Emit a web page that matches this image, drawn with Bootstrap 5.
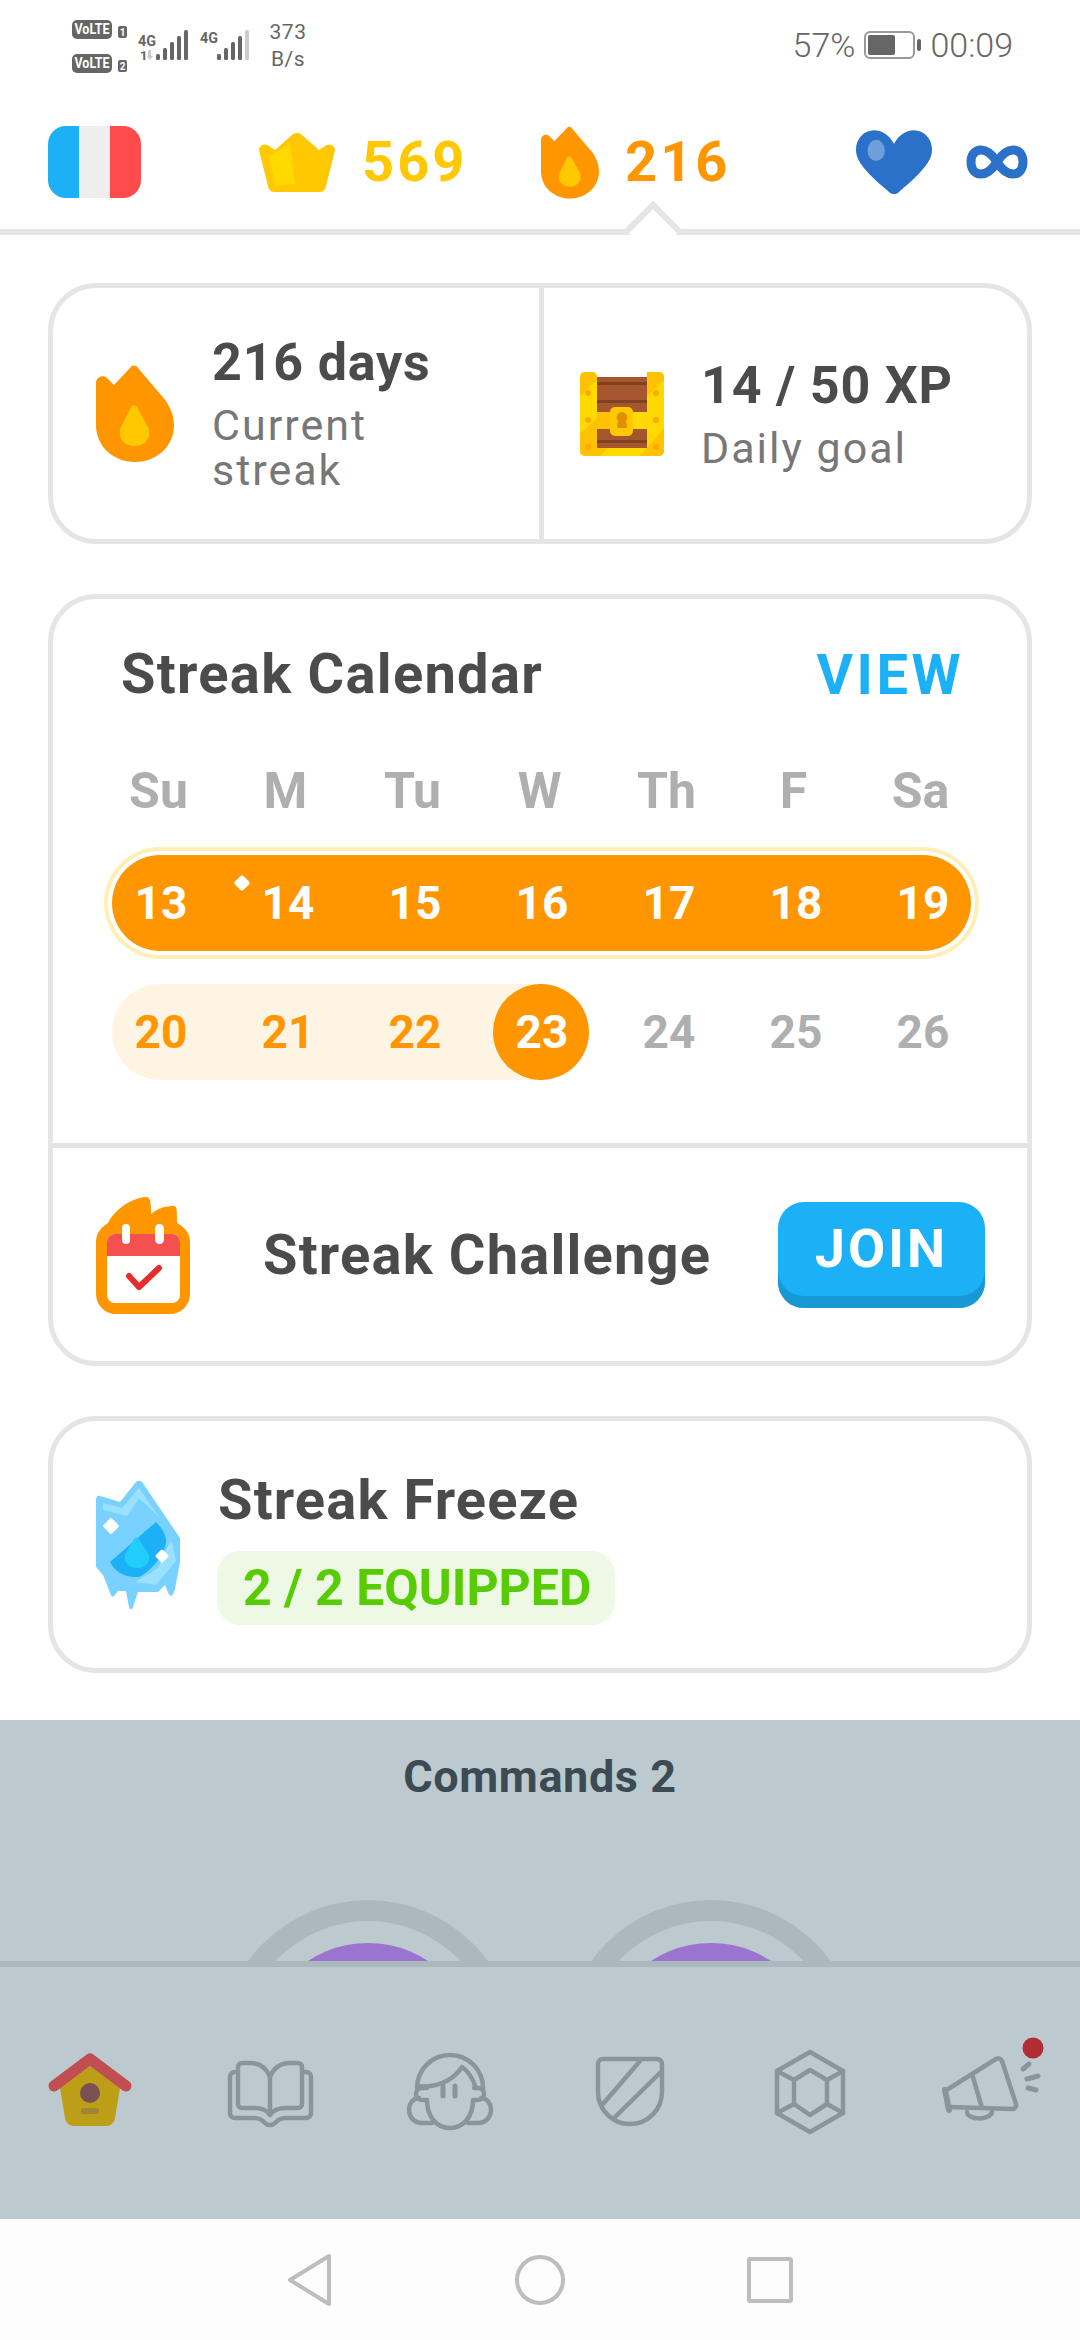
<!DOCTYPE html>
<html lang="en">
<head>
  <meta charset="UTF-8">
  <title>Streak</title>
  <link href="https://cdn.jsdelivr.net/npm/bootstrap@5.3.0/dist/css/bootstrap.min.css" rel="stylesheet">
  <style>
    html, body { margin: 0; }
    body {
      width: 1080px;
      height: 2340px;
      overflow: hidden;
      background: #fff;
      font-family: Roboto, "Liberation Sans", sans-serif;
      color: #4b4b4b;
    }
    svg { display: block; flex: none; }

    /* status bar */
    .status-bar { height: 100px; flex: none; color: #666; }
    .signal-icons { margin: 10px 0 0 60px; }
    .net-speed { font-size: 21px; line-height: 27px; font-weight: 400; text-align: center; width: 44px; margin-top: 19px; margin-left: -4px; letter-spacing: .5px; }
    .status-right { font-size: 34px; font-weight: 300; margin: 0 67px 0 auto; height: 90px; gap: 9px; }

    /* top bar */
    .top-bar { height: 135px; flex: none; padding: 0 0 5px 48px; border-bottom: 6px solid #e5e5e5; }
    .flag-box { width: 93px; height: 72px; border-radius: 18px; overflow: hidden; }
    .flag-box span { flex: 1; }
    .flag-blue { background: #1cb0f6; }
    .flag-white { background: #eeeeef; }
    .flag-red { background: #ff4b4b; }
    .stat-num { font-size: 56px; font-weight: 700; letter-spacing: 3px; line-height: 1; }
    .crown-group { margin-left: 118px; gap: 27px; width: 208px; color: #ffc800; }
    .flame-group { margin-left: 74px; gap: 26px; width: 187px; color: #ff9600; }
    .hearts-group { margin-left: 128px; gap: 34px; }
    .notch {
      position: absolute;
      left: 633px;
      bottom: -20px;
      width: 40px;
      height: 40px;
      background: #fff;
      border-top: 6px solid #e5e5e5;
      border-left: 6px solid #e5e5e5;
      transform: rotate(45deg);
    }

    /* cards */
    .page-main { padding: 48px 48px 0; gap: 50px; height: 1485px; flex: none; }
    .panel { border: 5px solid #e5e5e5; border-radius: 48px; background: #fff; overflow: hidden; }
    .panel-goal { height: 261px; }
    .goal-left { flex: 0 0 491px; width: 491px; border-right: 5px solid #e5e5e5; padding-left: 43px; gap: 38px; }
    .goal-right { flex: 1 1 0; width: auto; padding-left: 36px; gap: 37px; }
    .goal-title { font-size: 52px; font-weight: 700; line-height: 58px; letter-spacing: .8px; margin-bottom: 11px; }
    .goal-sub { font-size: 43px; line-height: 45px; color: #777; letter-spacing: 2px; }

    .cal-head { height: 152px; padding: 0 63px 0 68px; }
    .cal-title { font-size: 56px; font-weight: 700; letter-spacing: 1.3px; margin: 0; }
    .view-link { font-size: 56px; font-weight: 700; color: #1cb0f6; letter-spacing: 3.5px; text-decoration: none; }
    .day-names { height: 80px; margin: 0 44px 0 42px; }
    .day-names span, .day-cell { width: 127px; flex: none; text-align: center; }
    .day-names span { font-size: 50px; font-weight: 700; color: #afafaf; }
    .week { height: 96px; margin: 0 56px 0 59px; border-radius: 48px; }
    .week-on { margin-top: 24px; background: #ff9600; box-shadow: 0 0 0 4px #fff, 0 0 0 8px #ffefb5; }
    .week-off {
      margin-top: 33px;
      margin-bottom: 63px;
      border-radius: 48px 0 0 48px;
      background: linear-gradient(to right, #fdf4e4 428px, transparent 428px);
    }
    .week-days { margin: 0 -13px 0 -17px; height: 96px; }
    .day-cell { font-size: 46px; font-weight: 700; line-height: 96px; position: relative; padding-left: 5px; }
    .day-white { color: #fff; }
    .day-done { color: #ff9600; }
    .day-next { color: #afafaf; }
    .day-today { color: #fff; }
    .day-today::before {
      content: "";
      position: absolute;
      left: 17px;
      top: 0;
      width: 96px;
      height: 96px;
      border-radius: 50%;
      background: #ff9600;
    }
    .day-today span { position: relative; }
    .freeze-mark {
      position: absolute;
      left: 13.5px;
      top: 22px;
      width: 12px;
      height: 12px;
      background: #fff;
      border-radius: 2px;
      transform: rotate(45deg);
    }
    .challenge-row { height: 218px; padding: 0 42px 0 43px; border-top: 5px solid #e5e5e5; }
    .challenge-text { font-size: 56px; font-weight: 700; margin-left: 73px; letter-spacing: 1.2px; }
    .btn-join {
      margin-left: auto;
      width: 207px;
      height: 106px;
      padding: 0 0 12px;
      border: 0;
      border-radius: 26px;
      background: #1cb0f6;
      box-shadow: inset 0 -12px 0 #1899d6;
      color: #fff;
      font-size: 54px;
      font-weight: 700;
      letter-spacing: 3px;
      line-height: 1;
    }
    .panel-freeze { height: 257px; padding-left: 42px; gap: 37px; }
    .freeze-text { padding-top: 6px; }
    .freeze-title { font-size: 56px; font-weight: 700; letter-spacing: 1.15px; line-height: 60px; margin-bottom: 21px; }
    .freeze-pill {
      display: inline-block;
      background: #edf8e5;
      color: #58cc02;
      font-size: 50px;
      font-weight: 700;
      line-height: 74px;
      padding: 0 24px 0 26px;
      border-radius: 24px;
      margin-left: -1px;
    }

    /* dimmed lower part */
    .commands { height: 241px; flex: none; background: #bccacf; }
    .commands-title { font-size: 45px; font-weight: 700; color: #3c4b53; letter-spacing: .6px; margin-top: 31px; line-height: 52px; }
    .tab-bar { height: 258px; flex: none; background: #bccacf; border-top: 6px solid #abb9bf; padding-top: 63px; }
    .tab-bar svg { width: 180px; height: 130px; }
    .android-nav { height: 121px; flex: none; background: #fdfdfd; gap: 170px; }
  </style>
</head>
<body class="d-flex flex-column">

<svg width="0" height="0" class="position-absolute">
  <symbol id="flame" viewBox="0 0 78 97">
    <path fill="#ff9600" d="M34 3a4.500 4.500 0 0 1 8 0L70 36C75 44 78 52 78 60 78 82 60 97 39 97 18 97 0 82 0 60V18C0 12 7 9 11 13L18 20Z"/>
    <path fill="#ffc800" d="M35 42a3.500 3.500 0 0 1 6 0L52 62C56 72 50 81 38.500 81 27 81 21 72 25 62Z"/>
  </symbol>
</svg>

<div class="status-bar d-flex align-items-start">
  <svg class="signal-icons" width="210" height="70" viewBox="60 10 210 70" font-family="Roboto, sans-serif" font-weight="700">
    <rect x="72" y="20" width="40" height="19" rx="5" fill="#666"/>
    <text x="92" y="34" font-size="15" fill="#fff" text-anchor="middle" textLength="35" lengthAdjust="spacingAndGlyphs">VoLTE</text>
    <rect x="72" y="54" width="40" height="19" rx="5" fill="#666"/>
    <text x="92" y="68" font-size="15" fill="#fff" text-anchor="middle" textLength="35" lengthAdjust="spacingAndGlyphs">VoLTE</text>
    <rect x="118" y="26" width="9" height="12" rx="2" fill="#666"/>
    <text x="122.500" y="36" font-size="10" fill="#fff" text-anchor="middle">1</text>
    <rect x="118" y="60" width="9" height="12" rx="2" fill="#666"/>
    <text x="122.500" y="70" font-size="10" fill="#fff" text-anchor="middle">2</text>
    <text x="138" y="46" font-size="15" fill="#666" textLength="18" lengthAdjust="spacingAndGlyphs">4G</text>
    <text x="200" y="43" font-size="15" fill="#666" textLength="18" lengthAdjust="spacingAndGlyphs">4G</text>
    <text x="140" y="60" font-size="13" fill="#666">1</text>
    <path d="M148 50v6h-1l3 4 3-4h-2v-6z" fill="#ccc"/>
    <g fill="#666">
      <rect x="156" y="54" width="4" height="6" rx="1.500"/><rect x="163" y="48" width="4" height="12" rx="1.500"/><rect x="170" y="42" width="4" height="18" rx="1.500"/><rect x="177" y="36" width="4" height="24" rx="1.500"/><rect x="184" y="30" width="4" height="30" rx="1.500"/>
      <rect x="217" y="54" width="4" height="6" rx="1.500"/><rect x="224" y="48" width="4" height="12" rx="1.500"/><rect x="231" y="42" width="4" height="18" rx="1.500"/><rect x="238" y="36" width="4" height="24" rx="1.500"/>
    </g>
    <rect x="245" y="30" width="4" height="30" rx="1.500" fill="#ccc"/>
  </svg>
  <div class="net-speed">373<br>B/s</div>
  <div class="status-right d-flex align-items-center">
    <span>57%</span>
    <svg width="57" height="28" viewBox="0 0 57 28">
      <rect x="1" y="1" width="49" height="26" rx="5" fill="none" stroke="#999" stroke-width="2"/>
      <rect x="4" y="4" width="27" height="20" rx="2" fill="#666"/>
      <rect x="53" y="8" width="4" height="12" rx="2" fill="#666"/>
    </svg>
    <span>00:09</span>
  </div>
</div>

<div class="top-bar position-relative d-flex align-items-center">
  <div class="flag-box d-flex">
    <span class="flag-blue"></span><span class="flag-white"></span><span class="flag-red"></span>
  </div>
  <div class="crown-group d-flex align-items-center">
    <svg width="76" height="59" viewBox="0 0 76 59">
      <path fill="#ffc800" d="M33 2a7 7 0 0 1 10 0L60 17l6-4a6 6 0 0 1 10 4L67 53a6 6 0 0 1-6 6H15a6 6 0 0 1-6-6L0 17a6 6 0 0 1 10-4l6 4Z"/>
      <path fill="#ffd900" d="M10 23l21-12 5 40-20 2Z"/>
    </svg>
    <span class="stat-num">569</span>
  </div>
  <div class="flame-group d-flex align-items-center">
    <svg width="58" height="73"><use href="#flame"/></svg>
    <span class="stat-num">216</span>
  </div>
  <div class="hearts-group d-flex align-items-center">
    <svg width="76" height="64" viewBox="0 0 79 66">
      <path fill="#2b70c9" d="M39.500 14C34 4 26 0 19 0 8 0 0 9 0 20 0 30 6 40 33 63a8 8 0 0 0 13 0C73 40 79 30 79 20 79 9 71 0 60 0 53 0 45 4 39.500 14Z"/>
      <ellipse cx="21" cy="21" rx="9" ry="11" fill="#6f9ed9"/>
    </svg>
    <svg width="62" height="34" viewBox="0 0 62 34">
      <path fill="none" stroke="#2b70c9" stroke-width="9" d="M31 17C24 6 19 5 15 5 8 5 5 11 5 17 5 23 8 29 15 29 19 29 24 28 31 17 38 6 43 5 47 5 54 5 57 11 57 17 57 23 54 29 47 29 43 29 38 28 31 17Z"/>
    </svg>
  </div>
  <div class="notch"></div>
</div>

<main class="page-main d-flex flex-column">
  <section class="panel panel-goal row g-0">
    <div class="col-6 goal-left d-flex align-items-center">
      <svg width="78" height="97"><use href="#flame"/></svg>
      <div>
        <div class="goal-title">216 days</div>
        <div class="goal-sub">Current<br>streak</div>
      </div>
    </div>
    <div class="col-6 goal-right d-flex align-items-center">
      <svg width="84" height="84" viewBox="0 0 84 84">
        <!-- posts and bottom strip, the lid between the posts is open -->
        <path fill="#ffd900" d="M5 0H12a5 5 0 0 1 5 5V76H67V5a5 5 0 0 1 5-5H79a5 5 0 0 1 5 5V79a5 5 0 0 1-5 5H5a5 5 0 0 1-5-5V5a5 5 0 0 1 5-5Z"/>
        <path fill="#ffc200" d="M5 0H12a5 5 0 0 1 5 5V8L0 24V5a5 5 0 0 1 5-5ZM0 62 17 46V76H28L20 84H5a5 5 0 0 1-5-5ZM67 0H79a5 5 0 0 1 5 5V8L67 24V5ZM84 56V79a5 5 0 0 1-5 5H60Z"/>
        <rect x="17" y="5" width="50" height="71" fill="#a5562c"/>
        <g fill="#7e4220">
          <rect x="17" y="10" width="50" height="3"/><rect x="17" y="28" width="50" height="3"/><rect x="17" y="68" width="50" height="3"/>
        </g>
        <rect x="17" y="40" width="50" height="17" fill="#ffd900"/>
        <path fill="#ffc200" d="M17 40h13v17H17Z"/>
        <rect x="30" y="35" width="23" height="29" rx="5" fill="#ffc800"/>
        <path fill="#e08f00" d="M42 40a5.500 5.500 0 0 1 4 9l1 5a1.500 1.500 0 0 1-1 2h-8a1.500 1.500 0 0 1-1-2l1-5a5.500 5.500 0 0 1 4-9Z"/>
        <g fill="#ffa900">
          <circle cx="8" cy="21" r="3"/><circle cx="8" cy="48" r="3"/><circle cx="8" cy="75" r="3"/>
          <circle cx="76" cy="21" r="3"/><circle cx="76" cy="48" r="3"/><circle cx="76" cy="75" r="3"/>
        </g>
      </svg>
      <div>
        <div class="goal-title">14 / 50 XP</div>
        <div class="goal-sub">Daily goal</div>
      </div>
    </div>
  </section>

  <section class="panel">
    <div class="cal-head d-flex align-items-center justify-content-between">
      <h2 class="cal-title">Streak Calendar</h2>
      <a class="view-link" href="#">VIEW</a>
    </div>
    <div class="day-names d-flex align-items-center">
      <span>Su</span><span>M</span><span>Tu</span><span>W</span><span>Th</span><span>F</span><span>Sa</span>
    </div>
    <div class="week week-on">
      <div class="week-days d-flex">
        <div class="day-cell day-white">13</div>
        <div class="day-cell day-white"><i class="freeze-mark"></i>14</div>
        <div class="day-cell day-white">15</div>
        <div class="day-cell day-white">16</div>
        <div class="day-cell day-white">17</div>
        <div class="day-cell day-white">18</div>
        <div class="day-cell day-white">19</div>
      </div>
    </div>
    <div class="week week-off">
      <div class="week-days d-flex">
        <div class="day-cell day-done">20</div>
        <div class="day-cell day-done">21</div>
        <div class="day-cell day-done">22</div>
        <div class="day-cell day-today"><span>23</span></div>
        <div class="day-cell day-next">24</div>
        <div class="day-cell day-next">25</div>
        <div class="day-cell day-next">26</div>
      </div>
    </div>
    <div class="challenge-row d-flex align-items-center">
      <svg width="94" height="118" viewBox="0 0 94 118">
        <path fill="#ff9600" d="M12 27C20 12 36 2 50 1 54 1 55 4 55 18 62 12 70 10 78 10 81 10 81 14 81 27 90 32 94 38 94 46V98A20 20 0 0 1 74 118H20A20 20 0 0 1 0 98V46C0 38 4 32 12 27Z"/>
        <rect x="11" y="38" width="73" height="69" rx="8" fill="#fff"/>
        <path fill="#f4504f" d="M19 38H76a8 8 0 0 1 8 8V60H11V46a8 8 0 0 1 8-8Z"/>
        <rect x="26" y="28" width="8" height="20" rx="4" fill="#fff"/>
        <rect x="59" y="28" width="9" height="20" rx="4.500" fill="#fff"/>
        <path fill="none" stroke="#ea2b2b" stroke-width="6" stroke-linecap="round" stroke-linejoin="round" d="M33 80 43 91 63 72"/>
      </svg>
      <div class="challenge-text">Streak Challenge</div>
      <button class="btn btn-join" type="button">JOIN</button>
    </div>
  </section>

  <section class="panel panel-freeze d-flex align-items-center">
    <svg width="86" height="130" viewBox="0 0 86 130">
      <path fill="#79d1ff" d="M41 2a4 4 0 0 1 6 0L85 58V82L80 109C79 113 77 116 76 116 74 116 72 110 70 105L63 112H43L38 127C37 130 35 130 34 127L31 111H23L19 116C18 117 17 117 16 115L8 95 1 87V20C1 17 3 15 5 16L25 22Z"/>
      <path fill="#9ae0ff" d="M8 23 27 28 44 8 64 37 44 18 32 36 8 30ZM77 61 81 81 61 105 40 102 63 88 73 66Z"/>
      <path fill="#1cb0f6" d="M15 82 61 42C67 48 71 55 71 61 71 72 58 90 44 97 30 98 20 92 15 82Z"/>
      <path fill="#20cdfb" d="M39 59a3 3 0 0 1 5 0L54 75C56 82 50 88 42 88 34 88 28 82 30 75Z"/>
      <rect x="10" y="40" width="12" height="12" rx="1.500" fill="#fff" transform="rotate(45 16 46)"/>
      <rect x="62" y="71" width="10" height="10" rx="1.500" fill="#fff" transform="rotate(45 67 76)"/>
    </svg>
    <div class="freeze-text">
      <div class="freeze-title">Streak Freeze</div>
      <span class="freeze-pill">2 / 2 EQUIPPED</span>
    </div>
  </section>
</main>

<section class="commands d-flex flex-column justify-content-between">
  <div class="commands-title text-center">Commands 2</div>
  <svg width="1080" height="61" viewBox="0 1900 1080 61">
    <circle cx="368" cy="2048" r="148" fill="#abb9bf"/>
    <circle cx="368" cy="2048" r="127" fill="#bccacf"/>
    <circle cx="368" cy="2052" r="109" fill="#9b74cf"/>
    <circle cx="711" cy="2048" r="148" fill="#abb9bf"/>
    <circle cx="711" cy="2048" r="127" fill="#bccacf"/>
    <circle cx="711" cy="2052" r="109" fill="#9b74cf"/>
  </svg>
</section>

<nav class="tab-bar d-flex align-items-start">
  <svg viewBox="0 0 180 130">
    <path fill="#bd9f17" d="M90 36 60 58 65 88a9 9 0 0 0 9 8H106a9 9 0 0 0 9-8L120 58Z"/>
    <path fill="none" stroke="#c14e50" stroke-width="11" stroke-linecap="round" stroke-linejoin="round" d="M54 56 90 29 126 56"/>
    <circle cx="90" cy="63" r="10" fill="#7a5055"/>
    <rect x="81" y="78" width="18" height="6" rx="3" fill="#9f8535"/>
  </svg>
  <svg viewBox="0 0 180 130" fill="none" stroke="#88969c" stroke-width="4.500" stroke-linecap="round" stroke-linejoin="round">
    <path d="M90 47C86 37 78 33 70 33H62a4 4 0 0 0-4 4V74a4 4 0 0 0 4 4H74C82 78 87 80 90 85 93 80 98 78 106 78H118a4 4 0 0 0 4-4V37a4 4 0 0 0-4-4H110C102 33 94 37 90 47ZM90 47V85"/>
    <path d="M57 42H55a5 5 0 0 0-5 5V83a5 5 0 0 0 5 5H74C80 88 82 90 85 93a7 7 0 0 0 10 0C98 90 100 88 106 88H126a5 5 0 0 0 5-5V47a5 5 0 0 0-5-5H123"/>
  </svg>
  <svg viewBox="0 0 180 130" fill="none" stroke="#88969c" stroke-width="4.500" stroke-linecap="round" stroke-linejoin="round">
    <path d="M57 58A33 33 0 0 1 123 58V60"/>
    <path d="M57 56C75 58 92 52 102 37 108 41 113 49 116 58"/>
    <path d="M67 58H62a6 6 0 0 0 0 12H67C67 86 76 98 90 98 104 98 113 86 113 70H118a6 6 0 0 0 0-12H114"/>
    <path d="M59 68C53 68 49 74 49 79 49 88 55 93 62 93H72M121 68C127 68 131 74 131 79 131 88 125 93 118 93H108"/>
    <path stroke-width="5" d="M83 56V66M95 56V66"/>
  </svg>
  <svg viewBox="0 0 180 130" fill="none" stroke="#88969c" stroke-width="4.500" stroke-linecap="round" stroke-linejoin="round">
    <path d="M63 29H117a5 5 0 0 1 5 5V62a32 32 0 0 1-64 0V34a5 5 0 0 1 5-5Z"/>
    <path d="M100 31 63 74M121 42 75 87"/>
  </svg>
  <svg viewBox="0 0 180 130" fill="none" stroke="#88969c" stroke-width="4.500" stroke-linecap="round" stroke-linejoin="round">
    <path d="M90 22 123 41V83L90 102 57 83V41Z"/>
    <path d="M90 40 107 50V74L90 85 74 74V50ZM57 41 74 50M123 41 107 50M57 83 74 74M123 83 107 74"/>
  </svg>
  <svg viewBox="0 0 180 130" fill="none" stroke="#88969c" stroke-width="4.500" stroke-linecap="round" stroke-linejoin="round">
    <path d="M45 61 96 29a4 4 0 0 1 6 2L116 74a4 4 0 0 1-3 5L48 77"/>
    <path stroke-width="6" d="M45 60 49 80"/>
    <path d="M73 47 82 78M67 82C67 90 90 91 92 82"/>
    <path stroke-width="5" d="M123 39 129 34M127 49 138 46M128 58 136 60"/>
    <circle cx="133" cy="18" r="10.500" fill="#b02e33" stroke="none"/>
  </svg>
</nav>

<div class="android-nav d-flex align-items-center justify-content-center">
  <svg width="60" height="60" viewBox="0 0 60 60" fill="none" stroke="#bdbdbd" stroke-width="4" stroke-linejoin="round">
    <path d="M49 6 10 30 49 54Z"/>
  </svg>
  <svg width="60" height="60" viewBox="0 0 60 60" fill="none" stroke="#bdbdbd" stroke-width="4">
    <circle cx="30" cy="30" r="23"/>
  </svg>
  <svg width="60" height="60" viewBox="0 0 60 60" fill="none" stroke="#bdbdbd" stroke-width="4" stroke-linejoin="round">
    <rect x="9" y="9" width="42" height="42" rx="1"/>
  </svg>
</div>

<script src="https://cdn.jsdelivr.net/npm/bootstrap@5.3.0/dist/js/bootstrap.bundle.min.js"></script>
</body>
</html>
